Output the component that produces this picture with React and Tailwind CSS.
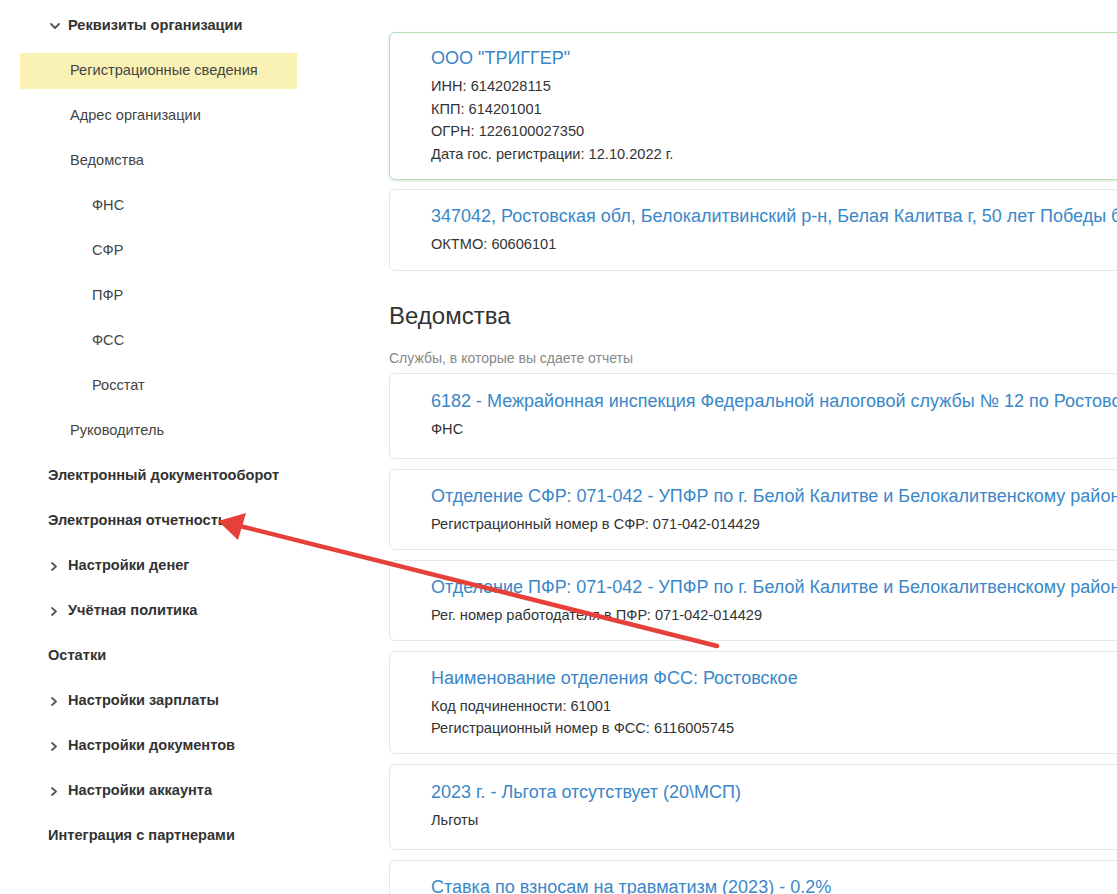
import React from "react";

const menu = [
  { label: "Реквизиты организации", level: 0, bold: true, chevron: "down" },
  { label: "Регистрационные сведения", level: 1, active: true },
  { label: "Адрес организации", level: 1 },
  { label: "Ведомства", level: 1 },
  { label: "ФНС", level: 2 },
  { label: "СФР", level: 2 },
  { label: "ПФР", level: 2 },
  { label: "ФСС", level: 2 },
  { label: "Росстат", level: 2 },
  { label: "Руководитель", level: 1 },
  { label: "Электронный документооборот", level: 0, bold: true },
  { label: "Электронная отчетность", level: 0, bold: true },
  { label: "Настройки денег", level: 0, bold: true, chevron: "right" },
  { label: "Учётная политика", level: 0, bold: true, chevron: "right" },
  { label: "Остатки", level: 0, bold: true },
  { label: "Настройки зарплаты", level: 0, bold: true, chevron: "right" },
  { label: "Настройки документов", level: 0, bold: true, chevron: "right" },
  { label: "Настройки аккаунта", level: 0, bold: true, chevron: "right" },
  { label: "Интеграция с партнерами", level: 0, bold: true },
];

const agencies = [
  {
    title: "6182 - Межрайонная инспекция Федеральной налоговой службы № 12 по Ростовской области",
    lines: ["ФНС"],
    tall: true,
  },
  {
    title: "Отделение СФР: 071-042 - УПФР по г. Белой Калитве и Белокалитвенскому району",
    lines: ["Регистрационный номер в СФР: 071-042-014429"],
  },
  {
    title: "Отделение ПФР: 071-042 - УПФР по г. Белой Калитве и Белокалитвенскому району",
    lines: ["Рег. номер работодателя в ПФР: 071-042-014429"],
  },
  {
    title: "Наименование отделения ФСС: Ростовское",
    lines: ["Код подчиненности: 61001", "Регистрационный номер в ФСС: 6116005745"],
  },
  {
    title: "2023 г. - Льгота отсутствует (20\\МСП)",
    lines: ["Льготы"],
    tall: true,
  },
  {
    title: "Ставка по взносам на травматизм (2023) - 0.2%",
    lines: [],
  },
];

function ChevronDown() {
  return (
    <svg width="10" height="6" viewBox="0 0 10 6" className="ml-[2px]">
      <polyline points="1,1 5,5 9,1" fill="none" stroke="#555" strokeWidth="1.8" strokeLinecap="round" strokeLinejoin="round" />
    </svg>
  );
}

function ChevronRight() {
  return (
    <svg width="6" height="9" viewBox="0 0 6 9" className="ml-[3px]">
      <polyline points="1,1 5,4.5 1,8" fill="none" stroke="#555" strokeWidth="1.8" strokeLinecap="round" strokeLinejoin="round" />
    </svg>
  );
}

function MenuItem({ item }) {
  const pad =
    item.level === 2 ? "pl-[72px]" : item.level === 1 ? "pl-[50px]" : "pl-[28px]";
  return (
    <div
      className={`h-[36px] flex items-center text-[14.6px] ${pad} ${
        item.active ? "bg-[#f9f2b4]" : ""
      } ${item.bold ? "font-bold text-[#333]" : "text-[#444]"}`}
    >
      {item.chevron && (
        <span className="w-[20px] flex items-center">
          {item.chevron === "down" ? <ChevronDown /> : <ChevronRight />}
        </span>
      )}
      <span className="whitespace-nowrap">{item.label}</span>
    </div>
  );
}

function Card({ title, lines, tall, highlight, roomy }) {
  let spacing = "pt-[14px] pb-[13.5px]";
  if (highlight) spacing = "pt-[13px] pb-[14px]";
  else if (tall) spacing = "pt-[15px] pb-[17.5px]";
  else if (roomy) spacing = "pt-[14px] pb-[14px]";
  return (
    <div
      className={`rounded-[6px] border bg-white pl-[41px] ${spacing} ${
        highlight
          ? "border-[#aee2b2] shadow-[0_1px_3px_rgba(0,0,0,0.12)]"
          : "border-[#e7e7e7]"
      }`}
    >
      <div className="text-[18px] leading-6 text-[#3a87c8] whitespace-nowrap">{title}</div>
      {lines.length > 0 && (
        <div className="mt-[5px] text-[14.6px] leading-[22.5px] text-[#333]">
          {lines.map((l) => (
            <div key={l} className="whitespace-nowrap">
              {l}
            </div>
          ))}
        </div>
      )}
    </div>
  );
}

export default function App() {
  return (
    <div
      className="relative w-[1117px] h-[894px] overflow-hidden bg-white flex"
      style={{ fontFamily: '"Liberation Sans", Arial, sans-serif' }}
    >
      {/* Sidebar */}
      <nav className="w-[277px] ml-[20px] pt-[8px] flex flex-col gap-[9px] shrink-0">
        {menu.map((item) => (
          <MenuItem key={item.label} item={item} />
        ))}
      </nav>

      {/* Main */}
      <main className="ml-[92px] w-[820px] shrink-0">
        <h2 className="-mt-[29px] mb-[29px] text-[24px] leading-8 text-[#333]">
          Реквизиты организации
        </h2>

        <div className="flex flex-col gap-[9px]">
          <Card
            highlight
            title='ООО "ТРИГГЕР"'
            lines={[
              "ИНН: 6142028115",
              "КПП: 614201001",
              "ОГРН: 1226100027350",
              "Дата гос. регистрации: 12.10.2022 г.",
            ]}
          />
          <Card
            roomy
            title="347042, Ростовская обл, Белокалитвинский р-н, Белая Калитва г, 50 лет Победы б-р"
            lines={["ОКТМО: 60606101"]}
          />
        </div>

        <h2 className="mt-[29px] text-[24px] leading-8 text-[#333]">Ведомства</h2>
        <p className="mt-[17px] mb-[6px] text-[14px] leading-[18px] text-[#888]">
          Службы, в которые вы сдаете отчеты
        </p>

        <div className="flex flex-col gap-[10px]">
          {agencies.map((a) => (
            <Card key={a.title} {...a} />
          ))}
        </div>
      </main>

      {/* Red annotation arrow */}
      <svg
        className="absolute left-0 top-0 pointer-events-none"
        width="1117"
        height="894"
        viewBox="0 0 1117 894"
      >
        <line x1="717" y1="646" x2="236" y2="525" stroke="#e5413a" strokeWidth="4.5" strokeLinecap="round" />
        <polygon points="218,521 246,513 238,540" fill="#e5413a" />
      </svg>
    </div>
  );
}
